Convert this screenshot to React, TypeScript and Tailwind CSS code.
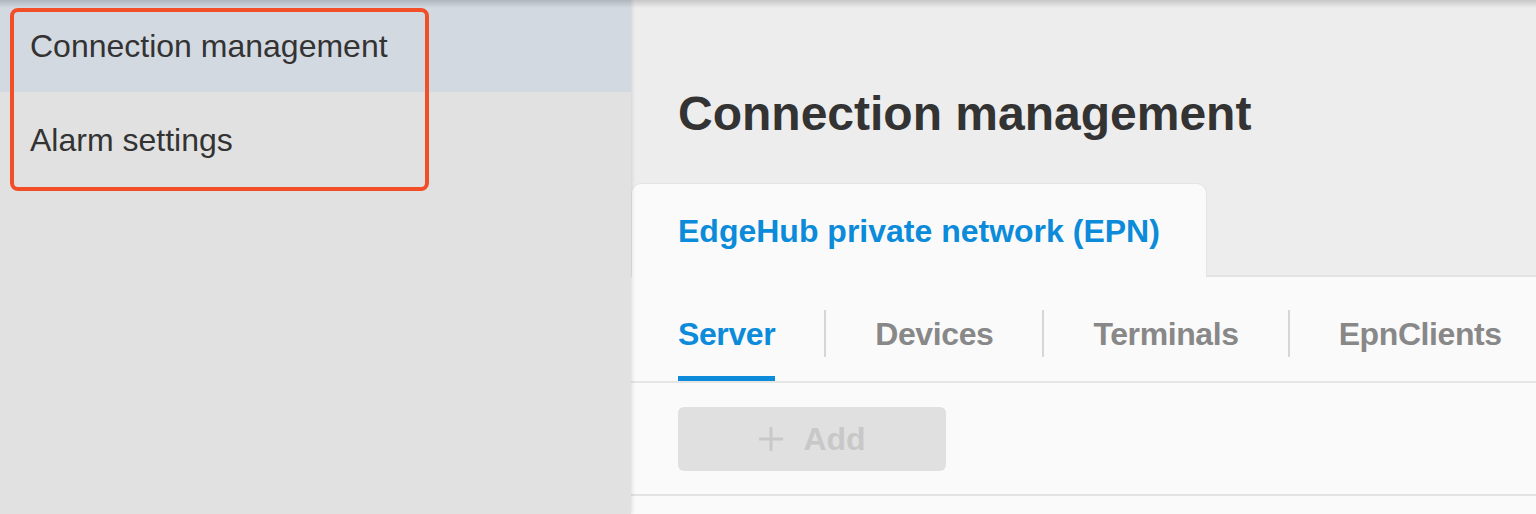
import React from "react";

const subTabs = ["Server", "Devices", "Terminals", "EpnClients"];

const PlusIcon = () => (
  <svg width="26" height="26" viewBox="0 0 26 26" fill="none">
    <path d="M13 1v24M1 13h24" stroke="#c8c8c8" strokeWidth="3" />
  </svg>
);

const Sidebar: React.FC = () => {
  return (
    <div className="relative z-10 w-[631px] shrink-0 bg-[#e1e1e1] shadow-[1px_0_4px_rgba(0,0,0,0.12)]">
      <div className="h-[92px] flex items-center pl-[30px] bg-[#d3d9e1] text-[32px] leading-[32px] text-[#333]">
        Connection management
      </div>
      <div className="h-[96px] flex items-center pl-[30px] text-[32px] leading-[32px] text-[#333]">
        Alarm settings
      </div>
    </div>
  );
};

export default function App() {
  return (
    <div className="relative flex w-full h-[514px] overflow-hidden font-['Liberation_Sans',Arial,sans-serif]">
      <Sidebar />

      <div className="flex-1 flex flex-col bg-[#ededed] pt-[90px]">
        <h1 className="pl-[47px] text-[48px] leading-[48px] font-bold text-[#333]">
          Connection management
        </h1>

        {/* tab header */}
        <div className="flex mt-[45px]">
          <div className="h-[94px] flex items-center px-[46px] bg-[#fafafa] border border-b-0 border-[#e3e3e3] rounded-t-[10px] text-[32px] leading-[32px] font-bold text-[#0b8bd9]">
            EdgeHub private network (EPN)
          </div>
          <div className="flex-1 border-b-2 border-[#e3e3e3]" />
        </div>

        <div className="flex-1 bg-[#fafafa]">
          {/* sub tabs */}
          <div className="flex pl-[47px] border-b-2 border-[#e5e5e5]">
            {subTabs.map((t, i) => (
              <React.Fragment key={t}>
                {i > 0 && <div className="w-[2px] h-[47px] mt-[33px] mx-[49px] bg-[#d6d6d6]" />}
                <div
                  className={
                    i === 0
                      ? "pt-[41px] pb-[26px] border-b-[5px] border-[#0b8bd9] text-[32px] leading-[32px] tracking-[-0.4px] font-bold text-[#0b8bd9]"
                      : "pt-[41px] pb-[26px] border-b-[5px] border-transparent text-[32px] leading-[32px] tracking-[-0.4px] font-bold text-[#888]"
                  }
                >
                  {t}
                </div>
              </React.Fragment>
            ))}
          </div>

          {/* toolbar */}
          <div className="pl-[47px] pt-[24px] pb-[23px] border-b-2 border-[#e3e3e3]">
            <button className="w-[268px] h-[64px] flex items-center justify-center gap-[19px] rounded-[6px] bg-[#e0e0e0] text-[32px] leading-[32px] font-bold text-[#c8c8c8]">
              <PlusIcon />
              <span>Add</span>
            </button>
          </div>
        </div>
      </div>

      {/* top shadow from header */}
      <div className="pointer-events-none absolute inset-x-0 top-0 h-[8px] bg-gradient-to-b from-[rgba(0,0,0,0.16)] to-transparent z-20" />

      {/* annotation box */}
      <div className="pointer-events-none absolute left-[10px] top-[8px] w-[419px] h-[183px] border-[4px] border-[#f24e28] rounded-[8px] z-30" />
    </div>
  );
}
